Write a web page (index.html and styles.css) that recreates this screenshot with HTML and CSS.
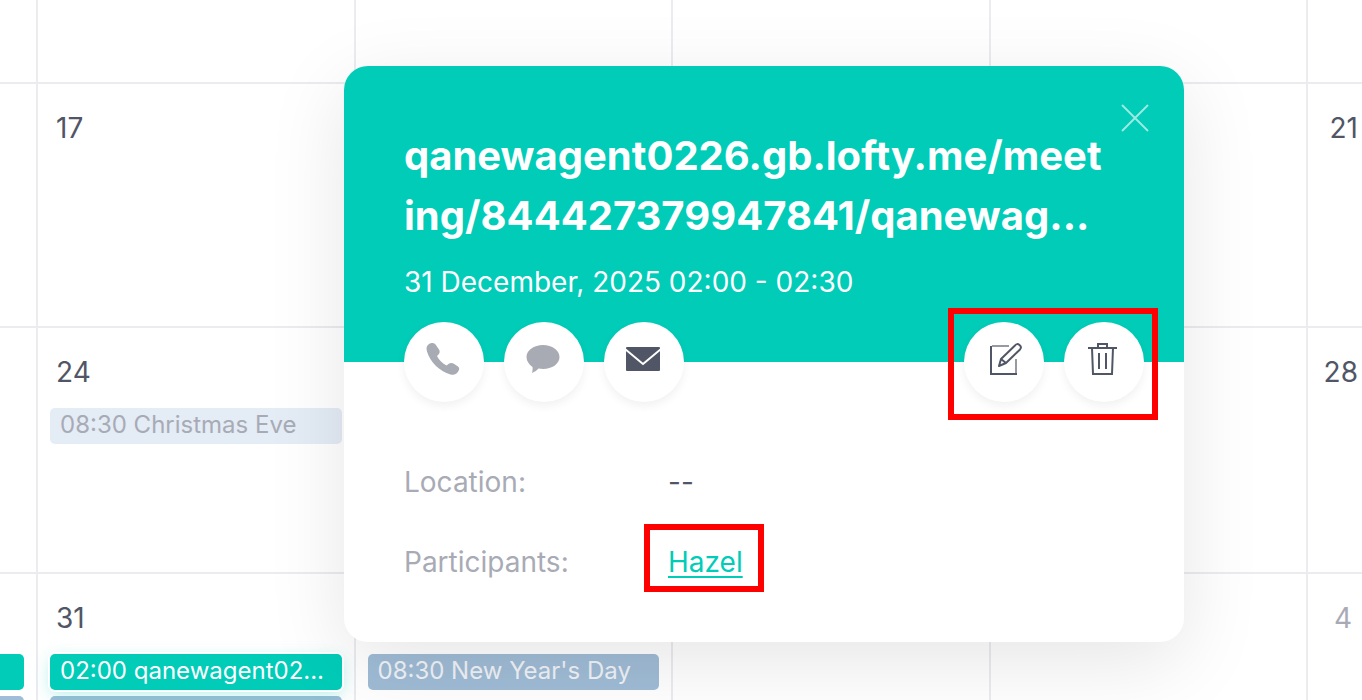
FILE: index.html
```
<!DOCTYPE html>
<html lang="en">
<head>
<meta charset="utf-8">
<title>Calendar</title>
<link rel="stylesheet" href="styles.css">
</head>
<body>
<main class="calendar">
  <div class="day"></div><div class="day"></div><div class="day"></div><div class="day"></div><div class="day"></div><div class="day"></div>

  <div class="day"></div>
  <div class="day"><span class="date">17</span></div>
  <div class="day"></div><div class="day"></div><div class="day"></div>
  <div class="day"><span class="date">21</span></div>

  <div class="day"></div>
  <div class="day"><span class="date">24</span><button class="event past">08:30 Christmas Eve</button></div>
  <div class="day"></div><div class="day"></div><div class="day"></div>
  <div class="day"><span class="date">28</span></div>

  <div class="day clipped"><span class="date"></span><span class="event meeting"></span><span class="event holiday"></span></div>
  <div class="day"><span class="date">31</span><button class="event meeting selected">02:00 qanewagent02...</button><span class="event holiday"></span></div>
  <div class="day"><span class="date"></span><button class="event holiday">08:30 New Year's Day</button></div>
  <div class="day"></div><div class="day"></div>
  <div class="day"><span class="date other">4</span></div>
</main>

<section class="popup" role="dialog" aria-labelledby="event-title">
  <header class="popup-head">
    <button class="close" aria-label="Close"><svg width="30" height="30" viewBox="0 0 30 30"><path d="M2 2 28 28M28 2 2 28"/></svg></button>
    <h1 class="title" id="event-title">qanewagent0226.gb.lofty.me/meet<br>ing/844427379947841/qanewag...</h1>
    <p class="time">31 December, 2025 02:00 - 02:30</p>
  </header>
  <div class="actions">
    <button class="round muted" aria-label="Call"><svg width="40" height="40" viewBox="0 0 40 40"><path fill="currentColor" d="M5 4C7 2.500 10 2.500 11.500 4.500L15 9.500C16 11 16 13 14.500 14.500L13 16C15 20 18.500 23.500 22.500 25.500L24.500 24C26 22.800 28 22.800 29.500 23.600L34 26.500C35.500 27.700 35.500 29.200 34.600 30.800C33 34 30 35.500 26.500 34.500C15.500 31.500 6 21.500 3 11.500C2 8 2.500 5.800 5 4Z"/></svg></button>
    <button class="round muted" aria-label="Message"><svg width="40" height="40" viewBox="0 0 40 40"><path fill="currentColor" d="M19 5C28 5 35.500 10 35.500 17S28 29 19 29C17.500 29 16 28.900 14.500 28.600C12.500 30.800 10.500 32 8 33C8.500 31 8.800 29 8.500 27C5 24.500 2.500 21 2.500 17C2.500 10 10 5 19 5Z"/></svg></button>
    <button class="round" aria-label="Email"><svg width="40" height="40" viewBox="0 0 40 40"><rect fill="currentColor" x="2" y="7" width="34" height="24" rx="1"/><path fill="none" stroke="#fff" stroke-width="2" d="M1 9 19 24 37 9"/></svg></button>
    <button class="round push" aria-label="Edit"><svg width="40" height="40" viewBox="0 0 40 40" fill="none" stroke="currentColor" stroke-width="2" stroke-linejoin="round"><path d="M7 34V6M6 34H33"/><path stroke-opacity=".6" d="M8 6H25M32 33V19"/><path d="M15 26 17 19 31 5.500Q33 3 35.500 5T36 9.500L22 23ZM17 19 22 23"/></svg></button>
    <button class="round" aria-label="Delete"><svg width="40" height="40" viewBox="0 0 40 40" fill="none" stroke="currentColor" stroke-width="2"><path d="M4 8H33M14 8V4H23V8M8 8 9 34H28L29 8M15 13V29M22 13V29"/></svg></button>
  </div>
  <dl class="details">
    <dt>Location:</dt><dd>--</dd>
    <dt>Participants:</dt><dd><a href="#hazel">Hazel</a></dd>
  </dl>
  <span class="marker marker-actions"></span>
  <span class="marker marker-person"></span>
</section>
</body>
</html>
```
FILE: styles.css
```
* { box-sizing: border-box; }
body {
  margin: 0;
  height: 100vh;
  overflow: hidden;
  position: relative;
  background: #fff;
  color: #515666;
  font-family: Inter, "Liberation Sans", sans-serif;
  font-size: 28px;
}
button { border: 0; padding: 0; font: inherit; cursor: pointer; }
.calendar {
  display: grid;
  grid-template-columns: 38px repeat(4, 1fr) 54px;
  grid-template-rows: 84px 244px 246px 126px;
  height: 100%;
}
.day {
  display: flex;
  flex-direction: column;
  gap: 6px;
  min-width: 0;
  min-height: 0;
  padding: 24px 12px 0 12px;
  border-right: 2px solid #ebebf0;
  border-bottom: 2px solid #ebebf0;
}
.day:nth-child(6n) { border-right: 0; padding: 24px 2px 0 0; align-items: flex-end; }
.day:nth-child(n+19) { border-bottom: 0; }
.day.clipped { padding: 24px 12px 0 0; }
.date { flex: none; height: 50px; padding: 0 6px; line-height: 40px; }
.day:nth-child(6n) .date { padding: 0 2px; }
.day:nth-child(6n) .date.other { padding: 0 8px; color: #a8abb5; }
.event {
  flex: none;
  height: 36px;
  padding: 0 10px 2px;
  border-radius: 5px;
  color: #fff;
  font-size: 24px;
  line-height: 34px;
  text-align: left;
  white-space: nowrap;
  overflow: hidden;
}
.event.past { background: #e4ecf6; color: #a8abb5; }
.event.meeting { background: #00ccb8; }
.event.selected { z-index: 1; box-shadow: 0 0 0 2px #fff, 0 4px 16px rgba(0, 204, 184, .3); }
.event.holiday { background: #a0bcd6; color: #f0f3f7; }
.clipped .event { border-radius: 0 5px 5px 0; }

.popup {
  position: absolute;
  left: 344px;
  top: 66px;
  width: 840px;
  z-index: 2;
  border-radius: 24px;
  background: #fff;
  box-shadow: 0 20px 80px rgba(0, 0, 0, .1);
}
.popup-head {
  padding: 60px;
  border-radius: 24px 24px 0 0;
  background: #00ccb8;
  color: #fff;
}
.title { margin: 0 0 16px; font-size: 40px; font-weight: 700; line-height: 60px; white-space: nowrap; }
.time { margin: 0; line-height: 40px; }
.close { position: absolute; top: 37px; right: 34px; width: 30px; height: 30px; background: none; color: rgba(255, 255, 255, .6); }
.close svg { display: block; fill: none; stroke: currentColor; stroke-width: 2; }
.actions { display: flex; gap: 20px; margin-top: -40px; padding: 0 40px 0 60px; }
.round {
  display: grid;
  place-items: center;
  width: 80px;
  height: 80px;
  padding-bottom: 4px;
  border-radius: 50%;
  background: #fff;
  color: #515666;
  box-shadow: 0 4px 10px rgba(0, 0, 0, .06);
}
.muted { color: #a8abb3; }
.push { margin-left: auto; }
.details {
  display: grid;
  grid-template-columns: 264px 1fr;
  row-gap: 40px;
  margin: 0;
  padding: 60px;
  line-height: 40px;
}
.details dt { color: #a8abb5; }
.details dd { margin: 0; }
.details a { color: #00ccb8; text-decoration-thickness: 2px; text-underline-offset: 4px; }
.marker { position: absolute; border: 6px solid #f00; pointer-events: none; }
.marker-actions { left: 604px; top: 242px; width: 210px; height: 112px; }
.marker-person { left: 300px; top: 458px; width: 120px; height: 68px; }
```
